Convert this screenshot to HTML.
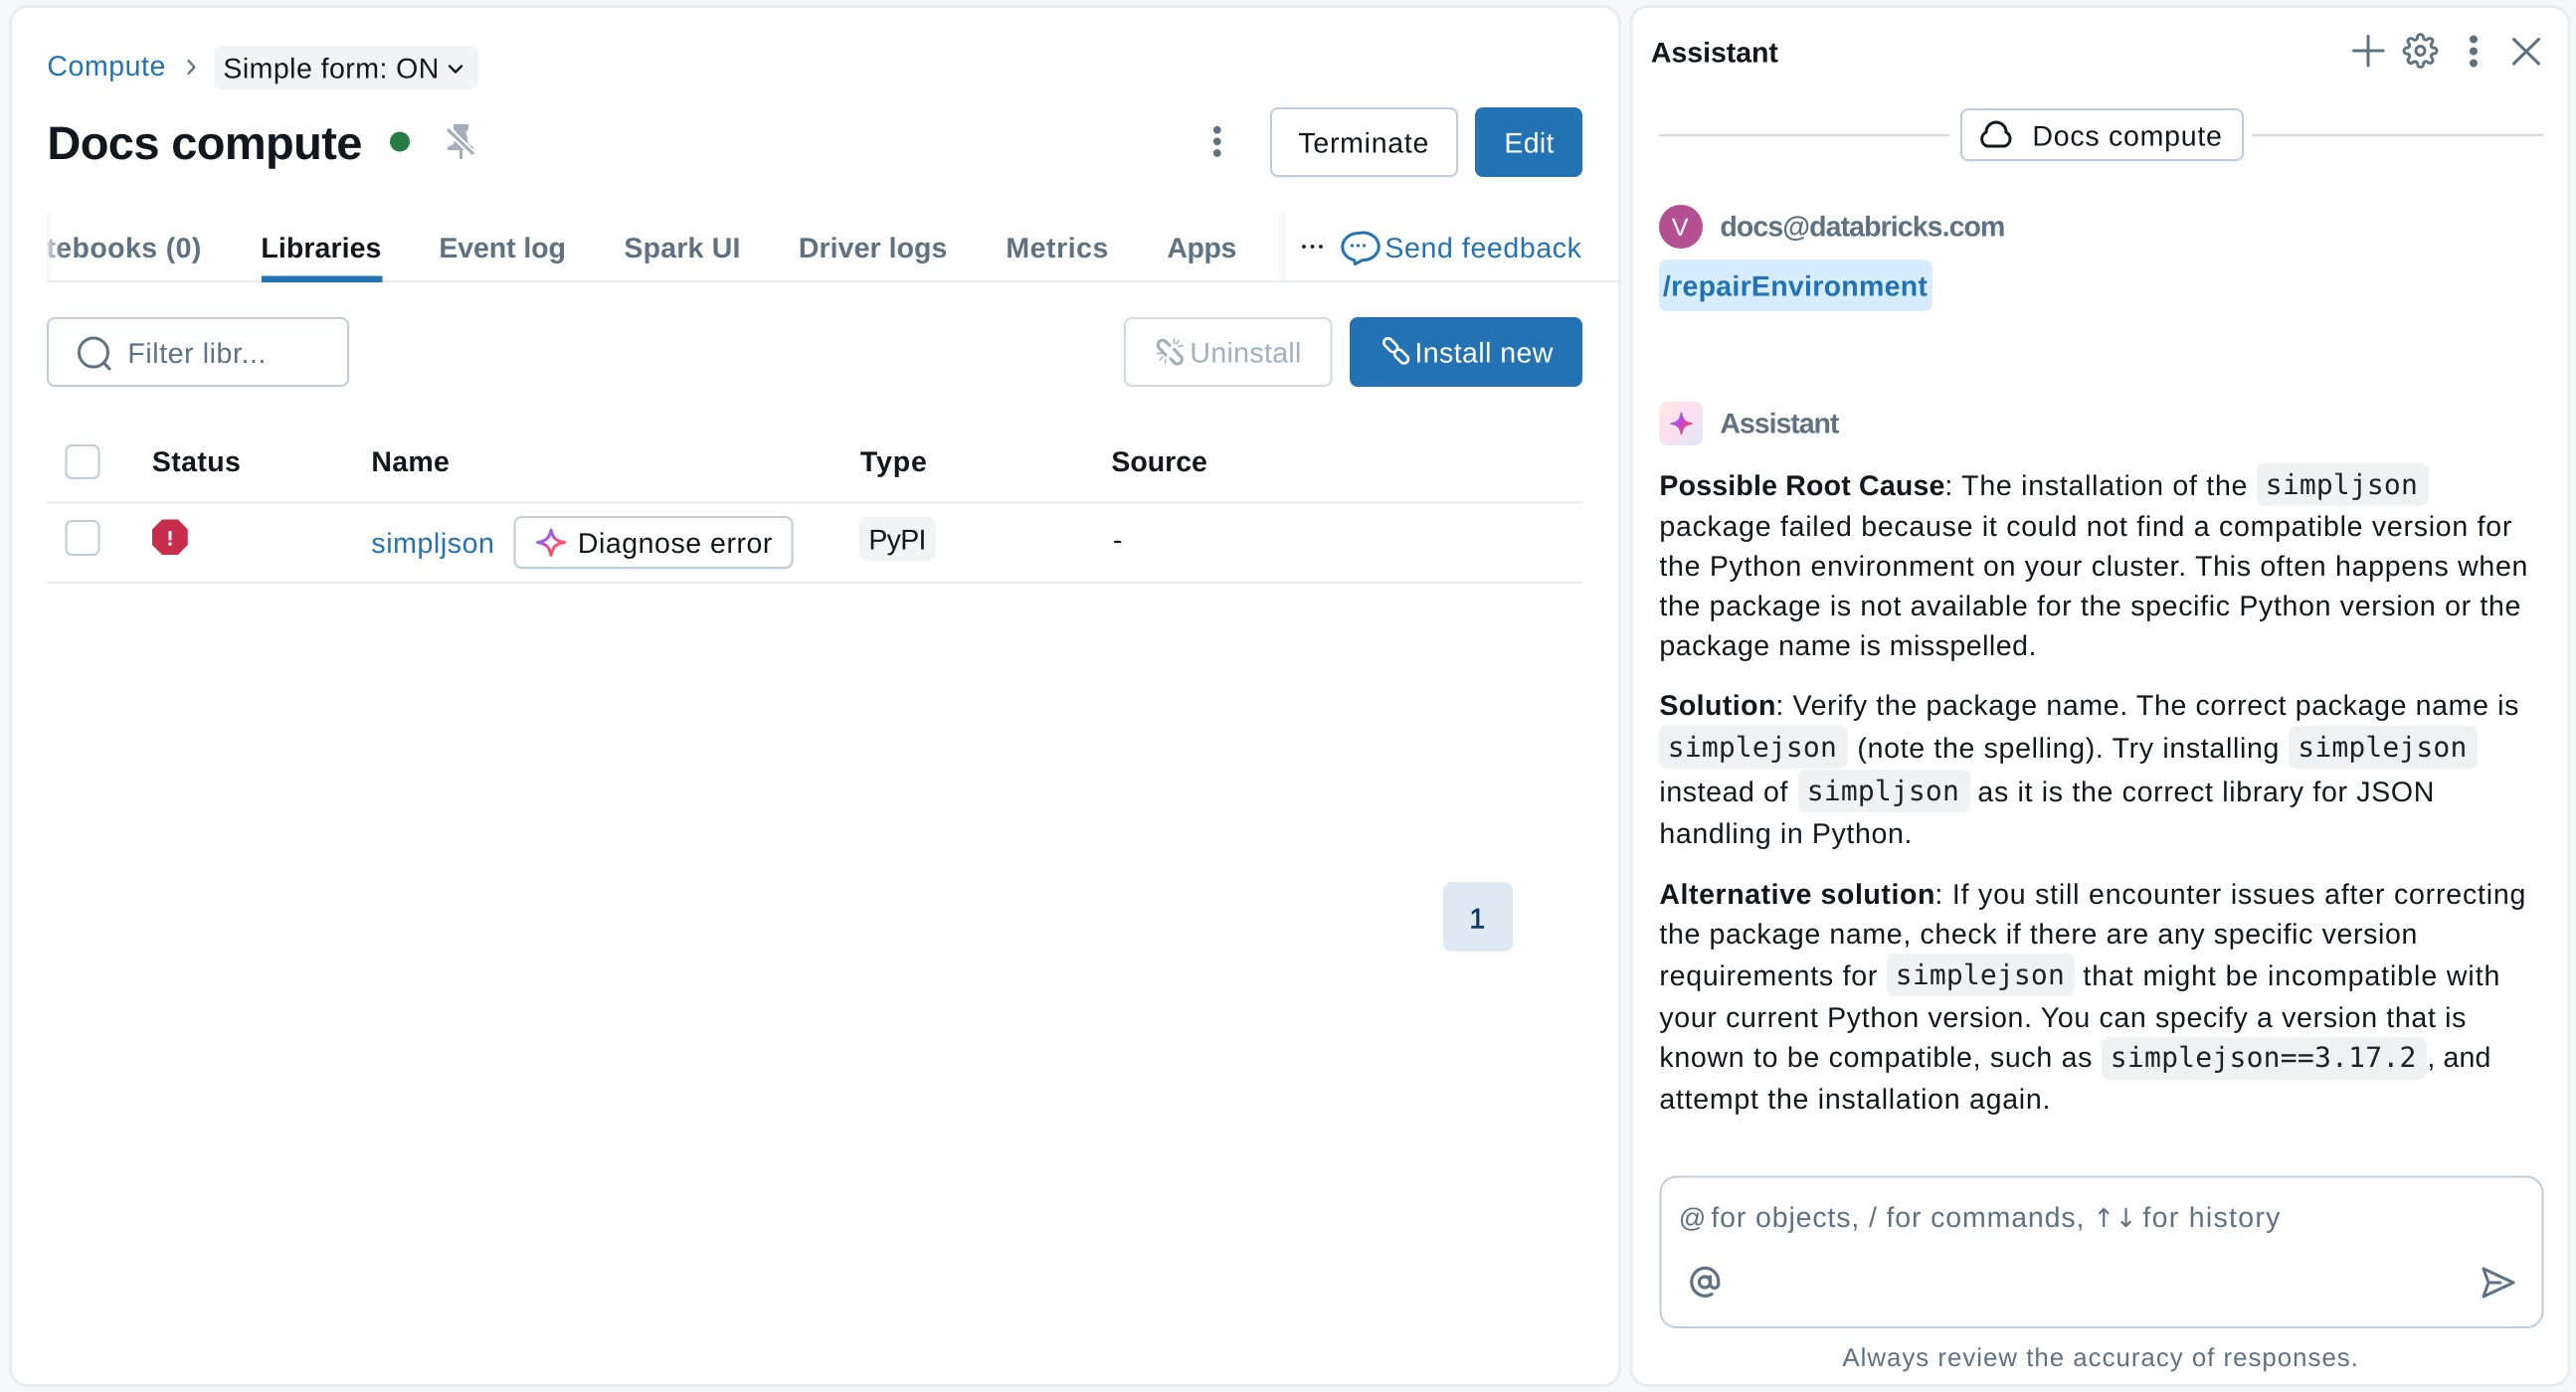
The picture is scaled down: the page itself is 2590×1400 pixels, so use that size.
<!DOCTYPE html>
<html lang="en">
<head>
<meta charset="utf-8">
<title>Docs compute</title>
<style>
html,body{margin:0;padding:0;background:#f6f7f9;width:2590px;height:1400px;overflow:hidden}
svg{display:block}
text{font-family:"Liberation Sans",sans-serif;font-size:28.5px;fill:#11171c;text-rendering:geometricPrecision;white-space:pre;transform:translateX(-.6px)}
.b{font-weight:700}
.g{fill:#5f7281}
.l{fill:#2272b4}
.w{fill:#fff}
.m{font-family:"DejaVu Sans Mono","Liberation Mono",monospace;font-size:28px;fill:#1a2127;transform:translateX(-1.2px)}
.i{fill:none;stroke:#5f7281;stroke-width:3;stroke-linecap:round;stroke-linejoin:round}
.btn{fill:#fff;stroke:#c0cdd8;stroke-width:2}
.code{fill:#f0f1f2}
.cb{fill:#fff;stroke:#c0cdd8;stroke-width:2}
.sh{filter:drop-shadow(0 1px 1px rgba(0,0,0,.07))}
</style>
</head>
<body>
<svg xmlns="http://www.w3.org/2000/svg" width="2590" height="1400" viewBox="0 0 2590 1400">
<defs>
<linearGradient id="ai" gradientUnits="userSpaceOnUse" x1="541" y1="536" x2="562" y2="558">
<stop offset="0" stop-color="#5b8be8"/><stop offset=".38" stop-color="#b04fe6"/><stop offset=".72" stop-color="#ff4f6a"/><stop offset="1" stop-color="#ff5f46"/>
</linearGradient>
<linearGradient id="ai2" gradientUnits="userSpaceOnUse" x1="1680" y1="420" x2="1700" y2="432">
<stop offset="0" stop-color="#5b7fe8"/><stop offset=".45" stop-color="#c545d8"/><stop offset="1" stop-color="#ff4f46"/>
</linearGradient>
<linearGradient id="avbg" x1="0" y1="0" x2="1" y2="1">
<stop offset="0" stop-color="#fde8e0"/><stop offset=".5" stop-color="#fbdff0"/><stop offset="1" stop-color="#dfe9f8"/>
</linearGradient>
<linearGradient id="fl" x1="0" y1="0" x2="1" y2="0">
<stop offset="0" stop-color="#f2f2f2" stop-opacity=".85"/><stop offset=".4" stop-color="#fff" stop-opacity=".35"/><stop offset="1" stop-color="#fff" stop-opacity="0"/>
</linearGradient>
<linearGradient id="fr" x1="0" y1="0" x2="1" y2="0">
<stop offset="0" stop-color="#fff" stop-opacity="0"/><stop offset=".6" stop-color="#fbfbfb"/><stop offset="1" stop-color="#f2f2f2"/>
</linearGradient>
<clipPath id="tabclip"><rect x="47" y="213" width="1245" height="70"/></clipPath>
</defs>

<!-- panels -->
<rect x="0" y="0" width="2590" height="1400" fill="#f6f7f9"/>
<rect x="10.500" y="6.500" width="1618" height="1387" rx="17" fill="#fff" stroke="#e8ecf0" stroke-width="3"/>
<rect x="1640" y="6.500" width="943" height="1387" rx="17" fill="#fff" stroke="#e8ecf0" stroke-width="3"/>

<!-- breadcrumb -->
<text class="l" x="48" y="76" textLength="119">Compute</text>
<path d="M189.500 61L195.500 67.500L189.500 74" fill="none" stroke="#5f7281" stroke-width="2.200" stroke-linecap="round" stroke-linejoin="round"/>
<rect x="215.500" y="46" width="265" height="44" rx="8" fill="#f2f3f4"/>
<text x="225" y="78.500" textLength="217">Simple form: ON</text>
<path d="M452 66.500L458 72.500L464 66.500" fill="none" stroke="#11171c" stroke-width="2.400" stroke-linecap="round" stroke-linejoin="round"/>

<!-- title -->
<text class="b" x="48" y="160" style="font-size:47px" textLength="317">Docs compute</text>
<circle cx="402" cy="142.500" r="10" fill="#277c43"/>
<path d="M456 125H471V130L468.500 132.500L471 145L476 148V151H465V160H462V151H450V148L456 145L458.500 132.500L456 130Z" fill="#a2afb9"/>
<path d="M449 129L477 156" stroke="#fff" stroke-width="7"/>
<path d="M450 130L476 155" stroke="#a2afb9" stroke-width="3"/>

<!-- header actions -->
<circle cx="1223.800" cy="130.700" r="3.900" fill="#5f7281"/>
<circle cx="1223.800" cy="142.300" r="3.900" fill="#5f7281"/>
<circle cx="1223.800" cy="154" r="3.900" fill="#5f7281"/>
<rect class="btn sh" x="1278" y="109" width="187" height="68" rx="7"/>
<text x="1306" y="153.500" textLength="131">Terminate</text>
<rect x="1483" y="108" width="108" height="70" rx="8" fill="#2272b4"/>
<text class="w" x="1513" y="153.500" textLength="50">Edit</text>

<!-- tabs -->
<rect x="47" y="282" width="1581" height="2" fill="#e8ecf0"/>
<g clip-path="url(#tabclip)">
<text class="b g" x="47" y="259" textLength="156">tebooks (0)</text>
<text class="b" x="263" y="259" textLength="121">Libraries</text>
<text class="b g" x="442" y="259" textLength="127.500">Event log</text>
<text class="b g" x="628" y="259" textLength="117">Spark UI</text>
<text class="b g" x="803.500" y="259" textLength="149.500">Driver logs</text>
<text class="b g" x="1012" y="259" textLength="103">Metrics</text>
<text class="b g" x="1174" y="259" textLength="70">Apps</text>
</g>
<rect x="47" y="213" width="18" height="69" fill="url(#fl)"/>
<rect x="1278" y="213" width="14" height="69" fill="url(#fr)"/>
<rect x="263" y="277.500" width="121.500" height="6.500" fill="#2272b4"/>
<circle cx="1311" cy="248" r="1.900" fill="#11171c"/>
<circle cx="1319.500" cy="248" r="1.900" fill="#11171c"/>
<circle cx="1328" cy="248" r="1.900" fill="#11171c"/>
<path d="M1366 234.500A16 13.800 0 1 1 1370 261.600L1362.500 265.500L1361.500 261.600A16 13.800 0 0 1 1366 234.500Z" fill="none" stroke="#2272b4" stroke-width="3" stroke-linejoin="round"/>
<circle cx="1359.500" cy="247" r="1.600" fill="#2272b4"/>
<circle cx="1365.500" cy="247" r="1.600" fill="#2272b4"/>
<circle cx="1371.500" cy="247" r="1.600" fill="#2272b4"/>
<text class="l" x="1393" y="259" textLength="197.500">Send feedback</text>

<!-- filter row -->
<rect class="btn" x="48" y="320" width="302" height="68" rx="7"/>
<circle cx="94" cy="354.500" r="14.500" fill="none" stroke="#5f7281" stroke-width="3"/>
<path d="M104.500 365L110 371" fill="none" stroke="#5f7281" stroke-width="3" stroke-linecap="round"/>
<text class="g" x="129" y="365" textLength="139">Filter libr...</text>
<rect x="1131" y="320" width="207.500" height="68" rx="7" fill="#fff" stroke="#d1d9e1" stroke-width="2"/>
<g fill="none" stroke="#a2b0bc" stroke-linecap="round" stroke-linejoin="round">
<path stroke-width="3.200" d="M1176 347.500L1171.500 343A4.700 4.700 0 0 0 1165 349.500L1172 357"/>
<path stroke-width="3.200" d="M1180.500 351.500L1188 359.500A4.700 4.700 0 0 1 1181.500 365.500L1177 361"/>
<path stroke-width="1.500" d="M1180.500 341V345.500M1185.500 342.500L1182.500 346M1189 347.500L1185 348.500M1163.500 355.500L1168 355M1166 362L1169 359M1171.500 365V361.500"/>
</g>
<text x="1197" y="364.500" textLength="112" style="fill:#a2b0bc">Uninstall</text>
<rect x="1357" y="319" width="234" height="70" rx="8" fill="#2272b4"/>
<g fill="none" stroke="#fff" stroke-width="2.600">
<rect x="-8" y="-4.300" width="16" height="8.600" rx="4.300" transform="translate(1398.200 347.200) rotate(45)"/>
<rect x="-8" y="-4.300" width="16" height="8.600" rx="4.300" transform="translate(1409 358.500) rotate(45)"/>
</g>
<text class="w" x="1423" y="364.500" textLength="139">Install new</text>

<!-- table -->
<rect class="cb" x="66.500" y="448" width="33" height="33" rx="6"/>
<text class="b" x="153.500" y="474" textLength="89">Status</text>
<text class="b" x="374" y="474" textLength="78.500">Name</text>
<text class="b" x="865.500" y="474" textLength="67">Type</text>
<text class="b" x="1118" y="474" textLength="96.500">Source</text>
<rect x="47" y="504.300" width="1544" height="2" fill="#e8ecf0"/>
<rect class="cb" x="66.500" y="524" width="33" height="34" rx="6"/>
<path d="M163 522.500H179L188.800 532.500V548L179 558H163L153 548V532.500Z" fill="#c82d4c"/>
<rect x="169.500" y="534" width="3" height="9.500" rx="1" fill="#fff"/>
<circle cx="171" cy="547" r="1.800" fill="#fff"/>
<text class="l" x="374" y="556" textLength="123.500">simpljson</text>
<rect class="btn sh" x="517.500" y="520" width="279" height="51" rx="7"/>
<path d="M554 533C555.800 541 558.500 544 567.500 545.500C558.500 547 555.800 550 554 558.500C552.200 550 549.500 547 540.500 545.500C549.500 544 552.200 541 554 533Z" fill="none" stroke="url(#ai)" stroke-width="3" stroke-linejoin="round"/>
<text x="581.500" y="556" textLength="195.500">Diagnose error</text>
<rect x="864" y="520" width="77" height="44" rx="8" fill="#f2f3f4"/>
<text x="874" y="552.500" textLength="58">PyPI</text>
<text x="1119.500" y="552.500" textLength="10">-</text>
<rect x="47" y="585" width="1544" height="2" fill="#e8ecf0"/>

<!-- pagination -->
<rect x="1451" y="887" width="70" height="70" rx="9" fill="#dfe9f3"/>
<text x="1478" y="933.500" style="fill:#0e3a66;stroke:#0e3a66;stroke-width:.6" textLength="16">1</text>

<!-- assistant header -->
<text class="b" x="1660.500" y="62.500" textLength="128">Assistant</text>
<path class="i" d="M2381 36.500V66M2366.500 51H2396"/>
<g transform="translate(2415.500 33) scale(1.500)" fill="none" stroke="#5f7281" stroke-width="1.950" stroke-linecap="round" stroke-linejoin="round">
<circle cx="12" cy="12" r="3"/>
<path d="M19.400 15a1.650 1.650 0 0 0 .33 1.820l.06.06a2 2 0 0 1 0 2.830 2 2 0 0 1-2.830 0l-.06-.06a1.650 1.650 0 0 0-1.820-.33 1.650 1.650 0 0 0-1 1.510V21a2 2 0 0 1-2 2 2 2 0 0 1-2-2v-.09A1.650 1.650 0 0 0 9 19.400a1.650 1.650 0 0 0-1.820.33l-.06.06a2 2 0 0 1-2.830 0 2 2 0 0 1 0-2.830l.06-.06a1.650 1.650 0 0 0 .33-1.820 1.650 1.650 0 0 0-1.510-1H3a2 2 0 0 1-2-2 2 2 0 0 1 2-2h.09A1.650 1.650 0 0 0 4.600 9a1.650 1.650 0 0 0-.33-1.820l-.06-.06a2 2 0 0 1 0-2.830 2 2 0 0 1 2.830 0l.06.06a1.650 1.650 0 0 0 1.820.33H9a1.650 1.650 0 0 0 1-1.510V3a2 2 0 0 1 2-2 2 2 0 0 1 2 2v.09a1.650 1.650 0 0 0 1 1.510 1.650 1.650 0 0 0 1.820-.33l.06-.06a2 2 0 0 1 2.830 0 2 2 0 0 1 0 2.830l-.06.06a1.650 1.650 0 0 0-.33 1.820V9a1.650 1.650 0 0 0 1.510 1H21a2 2 0 0 1 2 2 2 2 0 0 1-2 2h-.09a1.650 1.650 0 0 0-1.510 1z"/>
</g>
<circle cx="2487" cy="39.500" r="4" fill="#5f7281"/>
<circle cx="2487" cy="51.500" r="4" fill="#5f7281"/>
<circle cx="2487" cy="63.500" r="4" fill="#5f7281"/>
<path class="i" d="M2527.500 39.500L2552.500 64M2552.500 39.500L2527.500 64"/>

<!-- context pill -->
<rect x="1668" y="135" width="292" height="2" fill="#d1d9e1"/>
<rect x="2264" y="135" width="293.500" height="2" fill="#d1d9e1"/>
<rect class="btn sh" x="1972" y="110" width="283" height="51" rx="7"/>
<path d="M1998 147H2015A7.500 7.500 0 0 0 2017 133A10 10 0 0 0 1997 133A7.500 7.500 0 0 0 1998 147Z" fill="none" stroke="#11171c" stroke-width="3" stroke-linejoin="round"/>
<text x="2044" y="146.500" textLength="190.500">Docs compute</text>

<!-- user message -->
<circle cx="1690" cy="228" r="22" fill="#b45091"/>
<text class="w" x="1681.500" y="237" style="font-size:25px" textLength="17">V</text>
<text class="b g" x="1730" y="237.500" textLength="287">docs@databricks.com</text>
<rect x="1668" y="261" width="275" height="52" rx="8" fill="#d7edfe"/>
<text class="b l" x="1672.500" y="297.500" textLength="266">/repairEnvironment</text>

<!-- assistant message -->
<rect x="1668" y="404" width="44" height="44" rx="8" fill="url(#avbg)"/>
<path d="M1690.500 415C1691.500 422 1694 425 1701.500 426C1694 427 1691.500 430 1690.500 437C1689.500 430 1687 427 1679.500 426C1687 425 1689.500 422 1690.500 415Z" fill="url(#ai2)" stroke="url(#ai2)" stroke-width="1.500"/>
<text class="b g" x="1730" y="435.500" textLength="120">Assistant</text>

<text class="b" x="1669" y="498" textLength="287">Possible Root Cause</text>
<text x="1956" y="498" textLength="304">: The installation of the</text>
<rect class="code" x="2269" y="466" width="173" height="43" rx="8"/>
<text class="m" x="2279" y="497" textLength="153">simpljson</text>
<text x="1669" y="539" textLength="857">package failed because it could not find a compatible version for</text>
<text x="1669" y="579" textLength="873">the Python environment on your cluster. This often happens when</text>
<text x="1669" y="619" textLength="866">the package is not available for the specific Python version or the</text>
<text x="1669" y="659" textLength="379">package name is misspelled.</text>

<text class="b" x="1669" y="719" textLength="117">Solution</text>
<text x="1786" y="719" textLength="747">: Verify the package name. The correct package name is</text>
<rect class="code" x="1668" y="730" width="190" height="43" rx="8"/>
<text class="m" x="1678" y="761" textLength="170">simplejson</text>
<text x="1868" y="762" textLength="424">(note the spelling). Try installing</text>
<rect class="code" x="2301" y="730" width="190" height="43" rx="8"/>
<text class="m" x="2311.500" y="761" textLength="170">simplejson</text>
<text x="1669" y="806" textLength="129">instead of</text>
<rect class="code" x="1808" y="774" width="173" height="43" rx="8"/>
<text class="m" x="1818" y="805" textLength="153">simpljson</text>
<text x="1989" y="806" textLength="459">as it is the correct library for JSON</text>
<text x="1669" y="848" textLength="254">handling in Python.</text>

<text class="b" x="1669" y="909" textLength="277">Alternative solution</text>
<text x="1946" y="909" textLength="594">: If you still encounter issues after correcting</text>
<text x="1669" y="949" textLength="762">the package name, check if there are any specific version</text>
<text x="1669" y="991" textLength="219">requirements for</text>
<rect class="code" x="1897" y="959" width="189" height="43" rx="8"/>
<text class="m" x="1907" y="990" textLength="170">simplejson</text>
<text x="2095" y="991" textLength="419">that might be incompatible with</text>
<text x="1669" y="1033" textLength="811">your current Python version. You can specify a version that is</text>
<text x="1669" y="1073" textLength="435">known to be compatible, such as</text>
<rect class="code" x="2113" y="1043" width="327" height="43" rx="8"/>
<text class="m" x="2123" y="1073" textLength="307.500">simplejson==3.17.2</text>
<text x="2441" y="1073" textLength="64">, and</text>
<text x="1669" y="1115" textLength="393">attempt the installation again.</text>

<!-- input -->
<rect x="1669.500" y="1183.500" width="887" height="151.500" rx="16" fill="#fff" stroke="#c0cdd8" stroke-width="2"/>
<text class="g" x="1688.500" y="1234" style="font-size:27px">@</text>
<text class="g" x="1721" y="1234" textLength="375">for objects, / for commands,</text>
<text class="g" x="2105" y="1234" style="font-family:'DejaVu Sans',sans-serif;font-size:26px" textLength="44">↑↓</text>
<text class="g" x="2155" y="1234" textLength="138">for history</text>
<g fill="none" stroke="#5f7281" stroke-width="3.200" stroke-linecap="round" stroke-linejoin="round">
<circle cx="1714" cy="1289.500" r="5.500"/>
<path d="M1719.500 1284V1291.500A4 4 0 0 0 1727.800 1291V1289.500A13.500 14 0 1 0 1721 1301.500"/>
</g>
<path d="M2497 1276L2527 1290L2497 1304L2502 1290Z M2502 1290H2514" fill="none" stroke="#5f7281" stroke-width="3" stroke-linejoin="round" stroke-linecap="round"/>
<text class="g" x="1853" y="1374" style="font-size:25.800px" textLength="518.500">Always review the accuracy of responses.</text>
</svg>
</body>
</html>
